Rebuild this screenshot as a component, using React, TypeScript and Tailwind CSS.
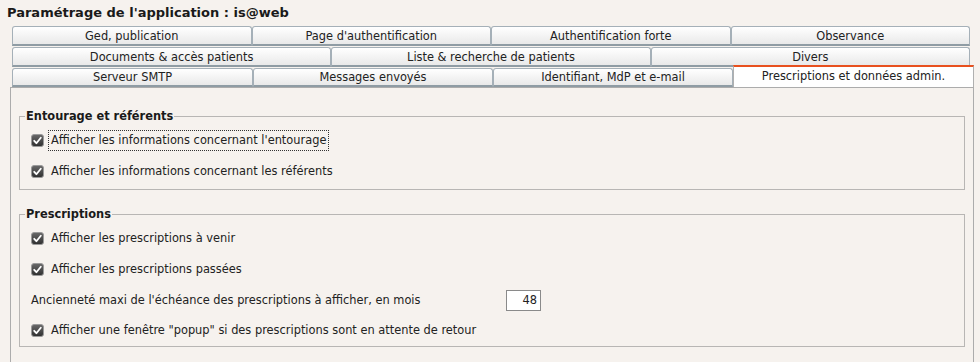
import React from "react";

const font = { fontFamily: '"DejaVu Sans", Verdana, sans-serif' };

function Tab({ label }: { label: string }) {
  return (
    <div className="flex-1 h-full flex items-center justify-center pt-[2px] rounded-t-[3px] border border-[#a5b0b8] border-b-2 border-b-[#8f9ca4] bg-gradient-to-b from-[#ffffff] to-[#e9e9e9] text-[11.4px] text-[#222]">
      {label}
    </div>
  );
}

function Check() {
  return (
    <svg width="13" height="13" viewBox="0 0 13 13" className="shrink-0">
      <defs>
        <linearGradient id="cbg" x1="0" y1="0" x2="0" y2="1">
          <stop offset="0" stopColor="#6a6a6a" />
          <stop offset="1" stopColor="#2e2e2e" />
        </linearGradient>
      </defs>
      <rect x="0.5" y="0.5" width="12" height="12" rx="2.5" fill="url(#cbg)" stroke="#9a9a9a" />
      <path d="M3.2 6.8 L5.4 9.2 L9.8 3.8" fill="none" stroke="#ffffff" strokeWidth="1.8" strokeLinecap="round" strokeLinejoin="round" />
    </svg>
  );
}

function CheckRow({ label, focus }: { label: string; focus?: boolean }) {
  return (
    <div className="flex items-center h-[31px] pl-[7px]">
      <Check />
      <span
        className={
          "ml-[4px] px-[2px] py-[1px] border border-dotted " +
          (focus ? "border-[#333]" : "border-transparent")
        }
      >
        {label}
      </span>
    </div>
  );
}

export default function App() {
  return (
    <div className="w-[980px] h-[362px] overflow-hidden bg-[#f6f2ee] text-[#222] flex flex-col" style={font}>
      <div className="h-[26px] pl-[7px] pt-[3px] font-bold text-[13px] text-[#1a1a1a]">
        Paramétrage de l'application : is@web
      </div>
      <div className="ml-[12px] w-[958px] h-[20px] flex">
        <Tab label="Ged, publication" />
        <Tab label="Page d'authentification" />
        <Tab label="Authentification forte" />
        <Tab label="Observance" />
      </div>
      <div className="ml-[12px] mt-[1px] w-[958px] h-[20px] flex">
        <Tab label="Documents & accès patients" />
        <Tab label="Liste & recherche de patients" />
        <Tab label="Divers" />
      </div>
      <div className="ml-[12px] mt-[1px] w-[962px] h-[19px] flex items-end">
        <div className="w-[241px] h-full flex"><Tab label="Serveur SMTP" /></div>
        <div className="w-[240px] h-full flex"><Tab label="Messages envoyés" /></div>
        <div className="w-[240px] h-full flex"><Tab label="Identifiant, MdP et e-mail" /></div>
        <div className="w-[241px] h-[22px] -mt-[3px] flex items-center justify-center bg-white border-t-2 border-t-[#e8501e] border-x border-x-[#b0b0b0] text-[11.4px] text-[#222] relative z-10">
          Prescriptions et données admin.
        </div>
      </div>
      <div className="ml-[10px] w-[964px] flex-1 border border-[#acacac] border-b-0 bg-[#f6f2ee] text-[11.4px] px-[8px] pt-[20px]">
        <fieldset className="border border-[#b8b6b4] pl-[4px] h-[82px] m-0">
          <legend className="font-bold text-[11.4px] px-[1px] ml-[1px] text-[#1a1a1a]">Entourage et référents</legend>
          <div>
            <CheckRow label="Afficher les informations concernant l'entourage" focus />
            <CheckRow label="Afficher les informations concernant les référents" />
          </div>
        </fieldset>
        <fieldset className="mt-[16px] border border-[#b8b6b4] pl-[4px] h-[141px] m-0">
          <legend className="font-bold text-[11.4px] px-[1px] ml-[1px] text-[#1a1a1a]">Prescriptions</legend>
          <div>
            <CheckRow label="Afficher les prescriptions à venir" />
            <CheckRow label="Afficher les prescriptions passées" />
            <div className="flex items-center h-[30px] pl-[7px]">
              <span className="w-[475px]">Ancienneté maxi de l'échéance des prescriptions à afficher, en mois</span>
              <div className="w-[35px] h-[21px] border border-[#8a8a8a] bg-white text-right pr-[3px] leading-[19px]">48</div>
            </div>
            <CheckRow label='Afficher une fenêtre "popup" si des prescriptions sont en attente de retour' />
          </div>
        </fieldset>
      </div>
    </div>
  );
}
